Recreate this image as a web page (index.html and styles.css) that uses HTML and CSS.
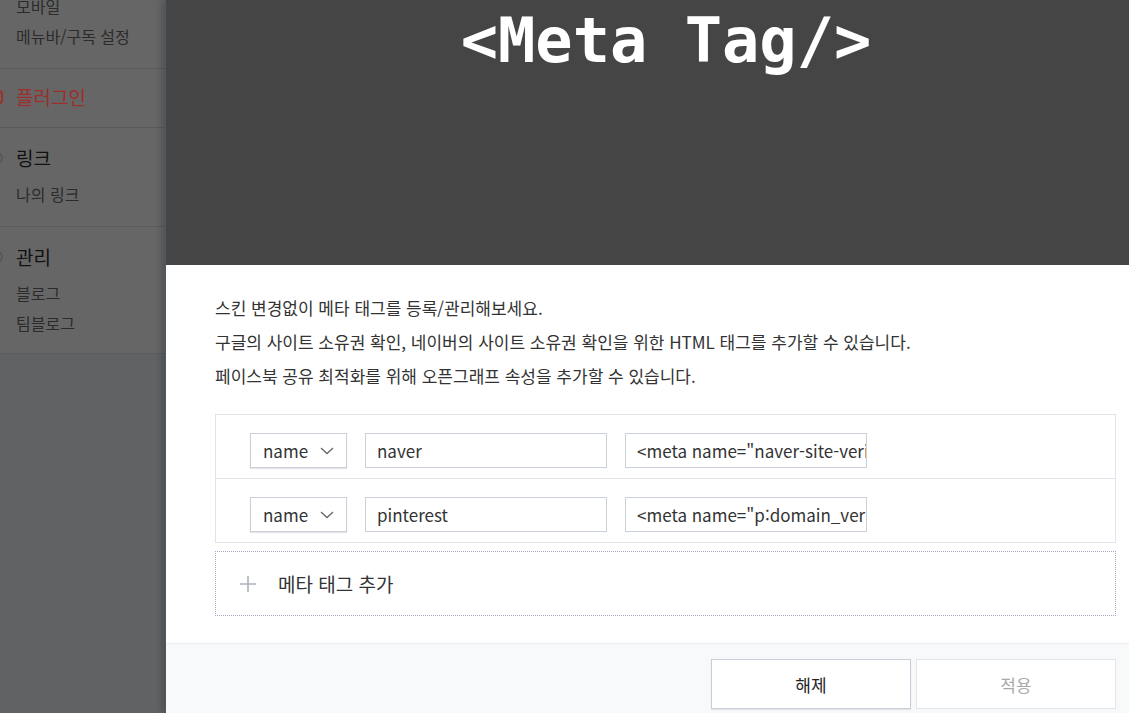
FILE: index.html
```html
<!DOCTYPE html>
<html lang="ko">
<head>
  <meta charset="UTF-8" />
  <title>메타 태그 등록</title>
  <link rel="stylesheet" href="styles.css">
</head>
<body>
  <div class="page">
    <aside class="sidebar">
      <div class="menu">
        <div class="group group-first">
          <a class="sub">모바일</a>
          <a class="sub">메뉴바/구독 설정</a>
        </div>
        <div class="group group-single">
          <div class="title title-on">
            <svg class="ico" width="14" height="14" viewBox="0 0 14 14"><rect x="1" y="1" width="12" height="12" rx="3" fill="none" stroke="#9c2f2b" stroke-width="2"/></svg>
            플러그인
          </div>
        </div>
        <div class="group">
          <div class="title">
            <svg class="ico" width="14" height="14" viewBox="0 0 14 14"><circle cx="7" cy="7" r="6" fill="none" stroke="#555" stroke-width="1.5"/></svg>
            링크
          </div>
          <a class="sub">나의 링크</a>
        </div>
        <div class="group">
          <div class="title">
            <svg class="ico" width="14" height="14" viewBox="0 0 14 14"><circle cx="7" cy="7" r="6" fill="none" stroke="#555" stroke-width="1.5"/></svg>
            관리
          </div>
          <a class="sub">블로그</a>
          <a class="sub">팀블로그</a>
        </div>
      </div>
    </aside>

    <section class="modal">
      <header class="modal-head">
        <h1>&lt;Meta Tag/&gt;</h1>
      </header>

      <div class="modal-body">
        <p>스킨 변경없이 메타 태그를 등록/관리해보세요.</p>
        <p>구글의 사이트 소유권 확인, 네이버의 사이트 소유권 확인을 위한 HTML 태그를 추가할 수 있습니다.</p>
        <p>페이스북 공유 최적화를 위해 오픈그래프 속성을 추가할 수 있습니다.</p>

        <div class="meta-list">
          <div class="meta-row">
            <div class="select">name
              <svg width="14" height="8" viewBox="0 0 14 8"><path d="M1 1l6 5.5L13 1" fill="none" stroke="#666" stroke-width="1.3"/></svg>
            </div>
            <input class="field" value="naver" />
            <input class="field" value='&lt;meta name="naver-site-verification" content="a1b2c3" /&gt;' />
          </div>
          <div class="meta-row">
            <div class="select">name
              <svg width="14" height="8" viewBox="0 0 14 8"><path d="M1 1l6 5.5L13 1" fill="none" stroke="#666" stroke-width="1.3"/></svg>
            </div>
            <input class="field" value="pinterest" />
            <input class="field" value='&lt;meta name="p:domain_verify" content="d4e5f6" /&gt;' />
          </div>
        </div>

        <button class="add-row">
          <svg width="16" height="16" viewBox="0 0 16 16"><path d="M8 0v16M0 8h16" stroke="#aab0bb" stroke-width="1.6"/></svg>
          메타 태그 추가
        </button>
      </div>

      <footer class="modal-foot">
        <button class="btn">해제</button>
        <button class="btn btn-off">적용</button>
      </footer>
    </section>
  </div>
</body>
</html>
```

FILE: styles.css
```css
body {
  margin: 0;
  overflow: hidden;
  font-family: 'Noto Sans CJK KR', 'Noto Sans', sans-serif;
  color: #333;
}
.page {
  display: flex;
  width: 1165px;
  height: 713px;
  background: #616264;
}

/* dimmed sidebar behind the modal */
.sidebar { width: 165px; flex-shrink: 0; }
.menu { background: #666; margin-top: -9px; }
.group {
  display: flex; flex-direction: column;
  padding: 15px 0 17px 16px;
  border-bottom: 1px solid #5b5b5b;
}
.group:last-child { padding-bottom: 15px; }
.group-first { padding-top: 0; }
.group-single { padding: 13px 0 15px 16px; }
.title {
  display: flex; align-items: center; gap: 13px;
  margin-left: -27px;
  font-size: 19px; line-height: 30px;
  color: #111;
}
.title-on { color: #9c2f2b; }
.sub {
  font-size: 16px; line-height: 30px;
  color: #2b2b2b;
}
.title + .sub { margin-top: 6px; }

.modal {
  width: 1000px; flex-shrink: 0;
  background: #fff;
  border-left: 1px solid #4b5a6b;
  box-shadow: -4px 0 6px rgba(0, 0, 0, .18);
}
.modal-head {
  height: 265px;
  background: #454545;
  text-align: center;
}
.modal-head h1 {
  margin: 0;
  padding-top: 10px;
  font-family: 'DejaVu Sans Mono', monospace;
  font-size: 62px; line-height: 1;
  color: #fff;
}

.modal-body { padding: 26px 50px 27px 49px; }
.modal-body p {
  margin: 0;
  font-size: 17px; line-height: 34px;
}
.meta-list {
  margin-top: 21px;
  border: 1px solid #dfe4eb;
}
.meta-row {
  display: flex; gap: 18px;
  padding: 18px 34px 10px;
}
.meta-row + .meta-row { border-top: 1px solid #dfe4eb; }
.select, .field {
  box-sizing: border-box;
  height: 35px;
  border: 1px solid #c9d0da;
  font-family: inherit; font-size: 17px;
  color: #333;
  background: #fff;
}
.select {
  display: flex; align-items: center; justify-content: space-between;
  width: 97px; padding: 0 12px;
  box-shadow: 0 1px 1px rgba(0, 0, 0, .1);
}
.field { width: 242px; padding: 0 0 0 11px; outline: none; }

.add-row {
  display: flex; align-items: center; gap: 22px;
  width: 100%; height: 65px;
  margin-top: 8px; padding: 0 0 0 24px;
  border: 1px dotted #aaa7c2;
  background: #fff;
  font-family: inherit; font-size: 19px;
  color: #333;
}

.modal-foot {
  display: flex; justify-content: flex-end; gap: 5px;
  padding: 15px 50px 20px 0;
  background: #f8f9fb;
  border-top: 1px solid #eceef2;
}
.btn {
  width: 200px; height: 50px;
  border: 1px solid #c8ced8;
  background: #fff;
  font-family: inherit; font-size: 17px;
  color: #222;
  box-shadow: 0 1px 1px rgba(0, 0, 0, .08);
}
.btn-off { border-color: #e3e6ea; color: #aaa; box-shadow: none; }
```
